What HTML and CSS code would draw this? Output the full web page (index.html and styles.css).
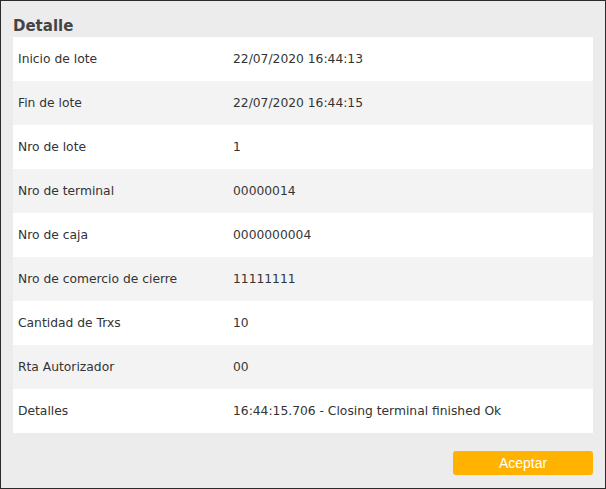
FILE: index.html
```html
<!DOCTYPE html>
<html>
<head>
<meta charset="utf-8">
<link rel="stylesheet" href="styles.css">
</head>
<body>
<div class="dialog">
  <h2 class="title">Detalle</h2>
  <div class="table">
    <div class="row"><span class="label">Inicio de lote</span><span class="value">22/07/2020 16:44:13</span></div>
    <div class="row"><span class="label">Fin de lote</span><span class="value">22/07/2020 16:44:15</span></div>
    <div class="row"><span class="label">Nro de lote</span><span class="value">1</span></div>
    <div class="row"><span class="label">Nro de terminal</span><span class="value">00000014</span></div>
    <div class="row"><span class="label">Nro de caja</span><span class="value">0000000004</span></div>
    <div class="row"><span class="label">Nro de comercio de cierre</span><span class="value">11111111</span></div>
    <div class="row"><span class="label">Cantidad de Trxs</span><span class="value">10</span></div>
    <div class="row"><span class="label">Rta Autorizador</span><span class="value">00</span></div>
    <div class="row"><span class="label">Detalles</span><span class="value">16:44:15.706 - Closing terminal finished Ok</span></div>
  </div>
  <div class="actions">
    <button class="btn">Aceptar</button>
  </div>
</div>
</body>
</html>
```
FILE: styles.css
```css
html, body {
  margin: 0;
  padding: 0;
}
body {
  width: 606px;
  height: 489px;
}
.dialog {
  box-sizing: border-box;
  width: 606px;
  height: 489px;
  border: 1px solid #2b2b2b;
  background: #ececec;
  padding: 12px 12px 0 12px;
  font-family: "DejaVu Sans", Verdana, sans-serif;
  color: #333;
}
.title {
  margin: 0;
  height: 24px;
  font-size: 15px;
  font-weight: bold;
  color: #444;
  line-height: 26px;
  padding-left: 0;
}
.table {
  display: flex;
  flex-direction: column;
}
.row {
  display: grid;
  grid-template-columns: 215px 1fr;
  height: 44px;
  align-items: center;
  padding-left: 5px;
  font-size: 12.3px;
  background: #fff;
}
.row:nth-child(even) {
  background: #f3f3f3;
}
.actions {
  display: flex;
  justify-content: flex-end;
  padding-top: 18px;
}
.btn {
  width: 140px;
  height: 24px;
  border: none;
  border-radius: 3px;
  background: #ffb300;
  color: #fff;
  font-family: "Liberation Sans", Arial, sans-serif;
  font-size: 14px;
  padding: 0;
}
```
